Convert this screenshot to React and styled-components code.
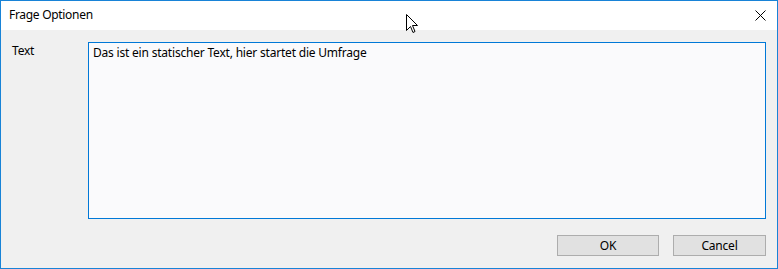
import styled, { createGlobalStyle } from 'styled-components';

const GlobalStyle = createGlobalStyle`
  html, body {
    margin: 0;
    padding: 0;
    background: #ffffff;
  }
  * {
    box-sizing: border-box;
  }
`;

const Window = styled.div`
  position: relative;
  width: 778px;
  height: 269px;
  border: 1px solid #1883d7;
  display: flex;
  flex-direction: column;
  font-family: 'Noto Sans', 'Open Sans', sans-serif;
  font-size: 12px;
  letter-spacing: -0.2px;
  color: #000000;
`;

const TitleBar = styled.div`
  height: 29px;
  background: #ffffff;
  display: flex;
  align-items: center;
  justify-content: space-between;
  padding-left: 8px;
`;

const Title = styled.span`
  line-height: 16px;
  margin-top: -1px;
  letter-spacing: -0.3px;
`;

const CloseButton = styled.div`
  width: 46px;
  height: 29px;
  display: flex;
  align-items: center;
  justify-content: center;
  margin-right: -6px;
`;

const Body = styled.div`
  flex: 1;
  background: #f0f0f0;
  display: flex;
  flex-direction: column;
  padding: 12px 11px 12px 0;
`;

const FieldRow = styled.div`
  display: flex;
`;

const Label = styled.div`
  width: 87px;
  padding-left: 11px;
  padding-top: 1px;
  line-height: 16px;
`;

const TextBox = styled.div`
  flex: 1;
  height: 177px;
  border: 1px solid #0078d7;
  background: #fafafc;
  padding: 2px 4px;
  line-height: 16px;
`;

const ButtonRow = styled.div`
  display: flex;
  justify-content: flex-end;
  gap: 14px;
  margin-top: 16px;
`;

const Button = styled.div`
  width: ${(p) => p.w}px;
  height: 21px;
  border: 1px solid #adadad;
  background: #e1e1e1;
  display: flex;
  align-items: center;
  justify-content: center;
  line-height: 16px;
`;

const Cursor = styled.svg`
  position: absolute;
  left: 404px;
  top: 12px;
`;

const App = () => {
  return (
    <>
      <GlobalStyle />
      <Window>
        <TitleBar>
          <Title>Frage Optionen</Title>
          <CloseButton>
            <svg width="11" height="11" viewBox="0 0 11 11">
              <path d="M0.5 0.5 L10.5 10.5 M10.5 0.5 L0.5 10.5" stroke="#000" strokeWidth="1" fill="none" />
            </svg>
          </CloseButton>
        </TitleBar>
        <Body>
          <FieldRow>
            <Label>Text</Label>
            <TextBox>Das ist ein statischer Text, hier startet die Umfrage</TextBox>
          </FieldRow>
          <ButtonRow>
            <Button w={102}>OK</Button>
            <Button w={93}>Cancel</Button>
          </ButtonRow>
        </Body>
        <Cursor width="13" height="21" viewBox="0 0 13 21">
          <path
            d="M1.5 1.5 L1.5 17.5 L5.5 13.5 L8 19.5 L10 18.5 L7.5 12.5 L12.5 12.5 Z"
            fill="#ffffff"
            stroke="#000000"
            strokeWidth="1"
            strokeLinejoin="miter"
          />
        </Cursor>
      </Window>
    </>
  );
};

export default App;
